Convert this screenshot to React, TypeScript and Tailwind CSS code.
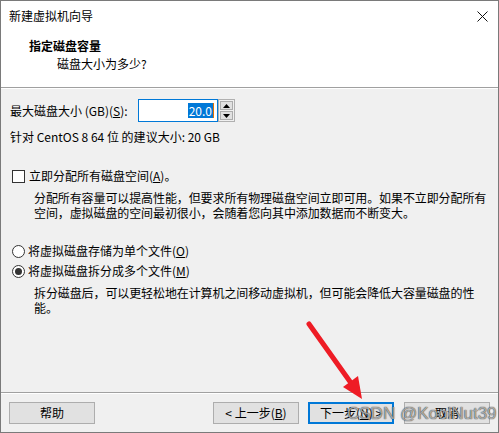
import React from 'react';

const font = { fontFamily: '"Noto Sans CJK SC", "Microsoft YaHei", sans-serif' };

const Btn: React.FC<{ label: React.ReactNode; primary?: boolean; className?: string }> = ({ label, primary, className }) => (
  <div
    className={`h-[22px] w-[86px] flex items-center justify-center text-[12px] text-black bg-[#e1e1e1] ${
      primary ? 'border-2 border-[#0078d7]' : 'border border-[#adadad]'
    } ${className ?? ''}`}
  >
    {label}
  </div>
);

export default function App() {
  return (
    <div
      className="relative w-[499px] h-[433px] bg-[#f0f0f0] border border-[#7a7a7a] flex flex-col text-black overflow-hidden"
      style={font}
    >
      {/* title bar */}
      <div className="h-[29px] bg-white flex items-center justify-between pl-[8px] pr-[10px]">
        <span className="text-[12px] leading-none">新建虚拟机向导</span>
        <svg width="11" height="11" viewBox="0 0 11 11" className="mt-[1px]">
          <path d="M0.5 0.5 L10.5 10.5 M10.5 0.5 L0.5 10.5" stroke="#111" strokeWidth="1" />
        </svg>
      </div>

      {/* header */}
      <div className="h-[57px] bg-white pl-[28px] pt-[8px]">
        <div className="text-[12px] font-bold leading-[16px]">指定磁盘容量</div>
        <div className="text-[12px] leading-[16px] pl-[28px] mt-[2px]">磁盘大小为多少?</div>
      </div>
      <div className="h-px bg-[#a0a0a0]" />
      <div className="h-px bg-white" />

      {/* body */}
      <div className="flex-1 flex flex-col pl-[9px] pr-[4px] text-[12px] whitespace-nowrap">
        <div className="mt-[10px] h-[23px] flex items-center">
          <span className="w-[128px]">
            最大磁盘大小 (GB)(<span className="underline">S</span>):
          </span>
          <div className="h-[23px] w-[80px] border border-[#0078d7] bg-white flex items-center justify-end pr-[3px]">
            <span className="bg-[#0078d7] text-white leading-[15px] px-[1px]">20.0</span>
            <span className="w-px h-[15px] bg-[#e07000]" />
          </div>
          <div className="h-[23px] w-[17px] flex flex-col gap-[1px] border border-[#b0b0b0] bg-[#f0f0f0] p-px">
            <div className="flex-1 bg-[#e1e1e1] border border-[#adadad] flex items-center justify-center">
              <svg width="7" height="4" viewBox="0 0 7 4"><path d="M3.5 0 L7 4 L0 4 Z" fill="#000" /></svg>
            </div>
            <div className="flex-1 bg-[#e1e1e1] border border-[#adadad] flex items-center justify-center">
              <svg width="7" height="4" viewBox="0 0 7 4"><path d="M0 0 L7 0 L3.5 4 Z" fill="#000" /></svg>
            </div>
          </div>
        </div>

        <div className="mt-[7px] leading-[16px]">针对 CentOS 8 64 位 的建议大小: 20 GB</div>

        <div className="mt-[23px] h-[16px] flex items-center pl-[2px]">
          <span className="w-[13px] h-[13px] border border-[#333] bg-white mr-[4px]" />
          <span>
            立即分配所有磁盘空间(<span className="underline">A</span>)。
          </span>
        </div>
        <div className="mt-[6px] pl-[24px] leading-[15px] tracking-[-0.1px]">
          <div>分配所有容量可以提高性能，但要求所有物理磁盘空间立即可用。如果不立即分配所有</div>
          <div>空间，虚拟磁盘的空间最初很小，会随着您向其中添加数据而不断变大。</div>
        </div>

        <div className="mt-[23px] h-[16px] flex items-center pl-[2px]">
          <span className="w-[13px] h-[13px] rounded-full border border-[#333] bg-white mr-[3px]" />
          <span>
            将虚拟磁盘存储为单个文件(<span className="underline">O</span>)
          </span>
        </div>
        <div className="mt-[4px] h-[16px] flex items-center pl-[2px]">
          <span className="w-[13px] h-[13px] rounded-full border border-[#333] bg-white mr-[3px] flex items-center justify-center">
            <span className="w-[7px] h-[7px] rounded-full bg-[#333]" />
          </span>
          <span>
            将虚拟磁盘拆分成多个文件(<span className="underline">M</span>)
          </span>
        </div>
        <div className="mt-[6px] pl-[24px] leading-[15px] tracking-[-0.1px]">
          <div>拆分磁盘后，可以更轻松地在计算机之间移动虚拟机，但可能会降低大容量磁盘的性</div>
          <div>能。</div>
        </div>
      </div>

      <div className="h-px bg-[#a0a0a0]" />
      <div className="h-px bg-white" />

      {/* footer */}
      <div className="h-[38px] flex items-start pt-[8px] pl-[8px] pr-[8px]">
        <Btn label="帮助" />
        <div className="flex-1" />
        <Btn label={<>&lt; 上一步(<span className="underline">B</span>)</>} />
        <Btn label={<>下一步(<span className="underline">N</span>) &gt;</>} primary className="ml-[9px]" />
        <Btn label="取消" className="ml-[10px]" />
      </div>

      {/* red arrow annotation */}
      <svg className="absolute left-0 top-0 pointer-events-none" width="499" height="433">
        <line x1="308" y1="323" x2="350" y2="382" stroke="#ee1c25" strokeWidth="5" strokeLinecap="round" />
        <polygon points="342,386 357,375 361,398" fill="#ee1c25" />
      </svg>

      {/* watermark */}
      <div
        className="absolute left-[346px] top-[403px] text-[17px] leading-[20px] text-white/60 pointer-events-none"
        style={{ fontFamily: '"Liberation Sans", Arial, sans-serif', textShadow: '0 0 1px rgba(0,0,0,0.8), 0 0 1px rgba(0,0,0,0.5)' }}
      >
        CSDN @KoolNut39
      </div>
    </div>
  );
}
